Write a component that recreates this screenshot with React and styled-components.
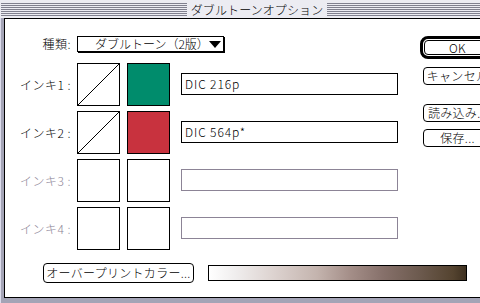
import React from "react";
import styled, { createGlobalStyle } from "styled-components";

const Global = createGlobalStyle`
  html, body { margin: 0; padding: 0; background: #fff; }
  body { font-family: "Noto Sans CJK JP", "Noto Sans", sans-serif; font-size: 12px; font-weight: 300; color: #000; }
`;

const Viewport = styled.div`
  width: 480px;
  height: 303px;
  overflow: hidden;
`;

const Window = styled.div`
  width: 515px;
  height: 303px;
  display: flex;
  flex-direction: column;
  background: #a4a4b6;
  border-left: 1px solid #dcdcec;
  box-sizing: border-box;
`;

const TitleBar = styled.div`
  height: 18px;
  flex: none;
  box-sizing: border-box;
  padding: 3px 2px 2px 1px;
  background: #ececf2;
  margin-left: -1px;
`;

const Stripes = styled.div`
  height: 13px;
  display: flex;
  justify-content: center;
  align-items: center;
  background: repeating-linear-gradient(to bottom, #80808e 0 1px, #ececf2 1px 2px);
`;

const Title = styled.div`
  background: #ececf2;
  padding: 0 4px;
  height: 15px;
  line-height: 15px;
  font-size: 12px;
  letter-spacing: 0.1px;
`;

const Frame = styled.div`
  flex: 1;
  display: flex;
  padding: 0 3px 5px 3px;
  min-height: 0;
`;

const Content = styled.div`
  flex: 1;
  display: flex;
  flex-direction: column;
  background: #fff;
  border: 1px solid #000;
`;

const TopArea = styled.div`
  display: flex;
`;

const LeftPanel = styled.div`
  width: 415px;
  flex: none;
  display: flex;
  flex-direction: column;
  padding-top: 17px;
  box-sizing: border-box;
`;

const TypeRow = styled.div`
  display: flex;
  align-items: center;
  height: 16px;
  margin-bottom: 11px;
`;

const Label = styled.div`
  width: 68px;
  flex: none;
  box-sizing: border-box;
  padding-right: 2px;
  text-align: right;
  line-height: 14px;
  white-space: nowrap;
  letter-spacing: 0.5px;
  color: ${(p) => (p.$disabled ? "#8c8496" : "#000")};
`;

const Popup = styled.div`
  margin-left: 4px;
  width: 147px;
  height: 16px;
  box-sizing: border-box;
  border: 1px solid #000;
  box-shadow: 1px 1px 0 #000;
  display: flex;
  align-items: center;
  padding-left: 17px;
  padding-right: 3px;
  line-height: 14px;
  white-space: nowrap;
`;

const PopupText = styled.span`
  flex: 1;
`;

const Arrow = styled.span`
  width: 0;
  height: 0;
  border-left: 6px solid transparent;
  border-right: 6px solid transparent;
  border-top: 7px solid #000;
`;

const InkList = styled.div`
  display: flex;
  flex-direction: column;
  gap: 5px;
`;

const InkRow = styled.div`
  display: flex;
  align-items: center;
  height: 43px;
`;

const Swatch = styled.div`
  width: 43px;
  height: 43px;
  box-sizing: border-box;
  border: 1px solid #000;
  background: ${(p) => p.$color || "#fff"};
  margin-left: ${(p) => p.$gap}px;
  flex: none;
`;

const Field = styled.div`
  margin-left: 11px;
  width: 217px;
  height: 22px;
  box-sizing: border-box;
  border: 1px solid ${(p) => (p.$disabled ? "#8c8496" : "#000")};
  padding-left: 3px;
  display: flex;
  align-items: center;
  line-height: 14px;
  letter-spacing: 0.9px;
  margin-top: -2px;
`;

const BottomRow = styled.div`
  display: flex;
  align-items: center;
  margin-top: 13px;
  padding-left: 38px;
  height: 20px;
`;

const Button = styled.div`
  box-sizing: border-box;
  border: 1px solid #000;
  border-radius: 4px;
  height: ${(p) => p.$h || 18}px;
  width: ${(p) => p.$w}px;
  display: flex;
  align-items: center;
  justify-content: center;
  line-height: 14px;
  white-space: nowrap;
  letter-spacing: 0.3px;
  flex: none;
`;

const Gradient = styled.div`
  margin-left: 14px;
  width: 259px;
  height: 16px;
  flex: none;
  box-sizing: border-box;
  border: 1px solid #000;
  background: linear-gradient(
    to right,
    #ffffff 0%,
    #f0eeee 10%,
    #ddd3d0 25%,
    #c4b4ae 42%,
    #a48e88 55%,
    #86706a 68%,
    #6c5a4e 82%,
    #54432f 95%,
    #3e3020 100%
  );
`;

const RightPanel = styled.div`
  display: flex;
  flex-direction: column;
  padding-top: 17px;
`;

const DefaultRing = styled.div`
  width: 75px;
  height: 23px;
  box-sizing: border-box;
  border: 3px solid #000;
  border-radius: 8px;
  padding: 1px;
  display: flex;
  margin-bottom: 8px;
`;

const SideButton = styled(Button)`
  margin-left: 3px;
  margin-top: ${(p) => p.$mt || 0}px;
`;

const Diagonal = () => (
  <svg width="41" height="41" viewBox="0 0 41 41" style={{ display: "block" }}>
    <line x1="0" y1="41" x2="41" y2="0" stroke="#000" strokeWidth="1" shapeRendering="crispEdges" />
  </svg>
);

const inks = [
  { n: "1", color: "#008c6c", name: "DIC 216p", active: true },
  { n: "2", color: "#c8323e", name: "DIC 564p*", active: true },
  { n: "3", color: null, name: "", active: false },
  { n: "4", color: null, name: "", active: false },
];

export default function App() {
  return (
    <Viewport>
      <Global />
      <Window>
        <TitleBar>
          <Stripes>
            <Title>ダブルトーンオプション</Title>
          </Stripes>
        </TitleBar>
        <Frame>
          <Content>
            <TopArea>
              <LeftPanel>
                <TypeRow>
                  <Label>種類:</Label>
                  <Popup>
                    <PopupText>ダブルトーン（2版）</PopupText>
                    <Arrow />
                  </Popup>
                </TypeRow>
                <InkList>
                  {inks.map((ink) => (
                    <InkRow key={ink.n}>
                      <Label $disabled={!ink.active}>インキ{ink.n} :</Label>
                      <Swatch $gap={4}>{ink.active && <Diagonal />}</Swatch>
                      <Swatch $gap={7} $color={ink.color} />
                      <Field $disabled={!ink.active}>{ink.name}</Field>
                    </InkRow>
                  ))}
                </InkList>
              </LeftPanel>
              <RightPanel>
                <DefaultRing>
                  <Button $w={67} $h={15}>OK</Button>
                </DefaultRing>
                <SideButton $w={69}>キャンセル</SideButton>
                <SideButton $w={69} $mt={19}>読み込み...</SideButton>
                <SideButton $w={69} $mt={7}>保存...</SideButton>
              </RightPanel>
            </TopArea>
            <BottomRow>
              <Button $w={151} $h={20}>オーバープリントカラー...</Button>
              <Gradient />
            </BottomRow>
          </Content>
        </Frame>
      </Window>
    </Viewport>
  );
}
